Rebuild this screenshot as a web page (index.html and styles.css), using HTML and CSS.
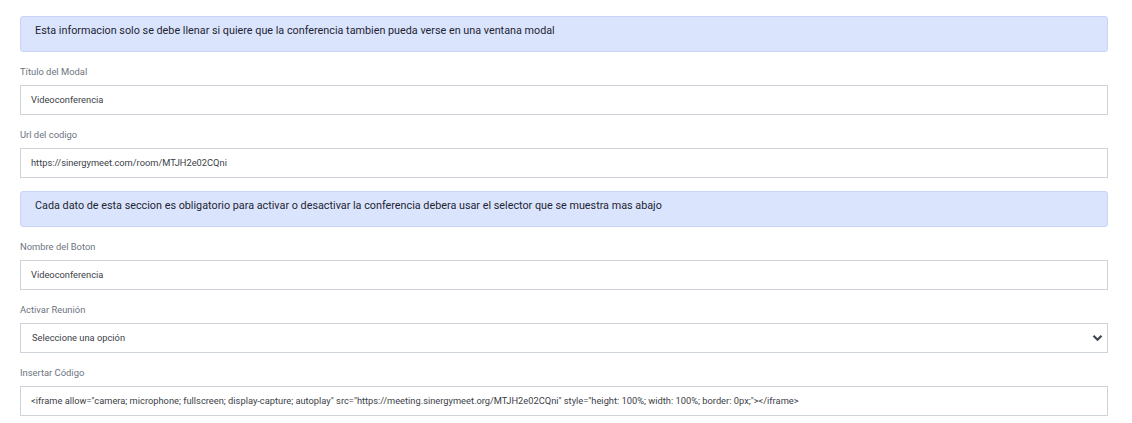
FILE: index.html
```html
<!DOCTYPE html>
<html lang="es">
<head>
<meta charset="utf-8">
<link rel="stylesheet" href="styles.css">
</head>
<body>
<div class="form">
  <div class="alert">Esta informacion solo se debe llenar si quiere que la conferencia tambien pueda verse en una ventana modal</div>
  <div class="group">
    <label class="label">Título del Modal</label>
    <div class="input">Videoconferencia</div>
  </div>
  <div class="group">
    <label class="label">Url del codigo</label>
    <div class="input">https://sinergymeet.com/room/MTJH2e02CQni</div>
  </div>
  <div class="alert">Cada dato de esta seccion es obligatorio para activar o desactivar la conferencia debera usar el selector que se muestra mas abajo</div>
  <div class="group">
    <label class="label">Nombre del Boton</label>
    <div class="input">Videoconferencia</div>
  </div>
  <div class="group">
    <label class="label">Activar Reunión</label>
    <div class="input select"><span>Seleccione una opción</span>
      <svg class="chev" width="11" height="8" viewBox="0 0 11 8"><path d="M1.5 1.8 L5.5 5.8 L9.5 1.8" fill="none" stroke="#3f4651" stroke-width="2.2"/></svg>
    </div>
  </div>
  <div class="group">
    <label class="label">Insertar Código</label>
    <div class="input">&lt;iframe allow="camera; microphone; fullscreen; display-capture; autoplay" src="https://meeting.sinergymeet.org/MTJH2e02CQni" style="height: 100%; width: 100%; border: 0px;"&gt;&lt;/iframe&gt;</div>
  </div>
</div>
</body>
</html>
```
FILE: styles.css
```css
* { box-sizing: border-box; }
html, body { margin: 0; padding: 0; background: #fff; }
body { font-family: Roboto, "Liberation Sans", sans-serif; }
.form { padding: 16px 24px 0 20px; display: flex; flex-direction: column; }
.alert {
  height: 36px;
  background: #dbe4fd;
  border: 1px solid #c7d4f7;
  border-radius: 3px;
  padding: 6px 14px 0 14px;
  font-size: 10.8px;
  line-height: 16px;
  color: #1d2433;
  margin-bottom: 13px;
}
.group { display: flex; flex-direction: column; margin-bottom: 13px; }
.label {
  font-size: 9.4px;
  line-height: 14px;
  height: 14px;
  margin-bottom: 6px;
  color: #6d7480;
}
.input {
  height: 30px;
  border: 1px solid #ced3da;
  padding: 0 10px;
  font-size: 9.3px;
  line-height: 28px;
  color: #3c4148;
  white-space: nowrap;
  overflow: hidden;
}
.select { display: flex; align-items: center; justify-content: space-between; padding-left: 11px; padding-right: 4px; }
.chev { display: block; }
```
